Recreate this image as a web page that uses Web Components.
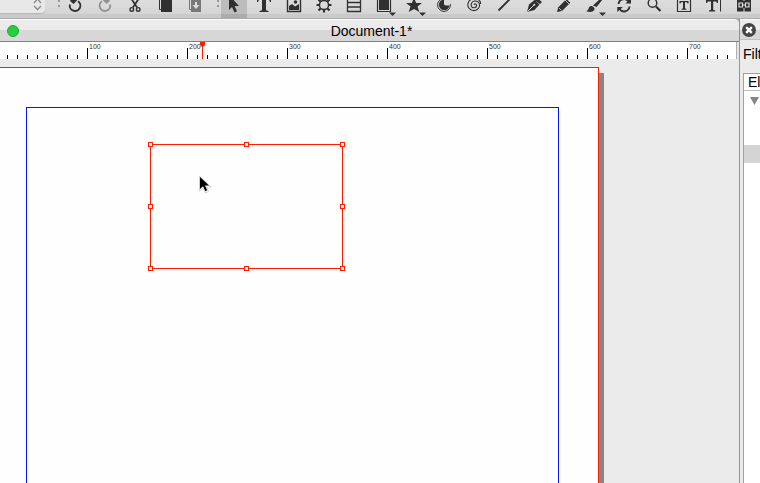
<!DOCTYPE html>
<html lang="en">
<head>
<meta charset="utf-8">
<title>Document-1*</title>
<style>
html, body { height: 100%; margin: 0; }
body { overflow: hidden; font-family: "Liberation Sans", Arial, sans-serif; color: #000; background: #ebebeb; }
</style>
</head>
<body>
<layout-app></layout-app>
<script>
const define = (name, html, setup) => customElements.define(name, class extends HTMLElement {
  constructor() {
    super();
    const t = document.createElement('template');
    t.innerHTML = html;
    this.attachShadow({ mode: 'open' }).append(t.content.cloneNode(true));
  }
  connectedCallback() { if (setup) setup(this, this.shadowRoot); }
});

/* Icon drawings on a 26 x 18 grid; shapes run past the top edge of the tool bar. */
const icons = {
  undo: '<path d="M7.900 4.500A5.300 5.300 0 1 0 16 1.200" fill="none" stroke="currentColor" stroke-width="1.900"/><path d="M8 -1h7v1.500L11.500 4 8.500 1.500z"/>',
  redo: '<path d="M18.100 4.500A5.300 5.300 0 1 1 10 1.200" fill="none" stroke="currentColor" stroke-width="1.900"/><path d="M18 -1h-7v1.500L14.500 4l3-2.500z"/>',
  cut: '<path d="M9.500-1l5.600 8.500M16.500-1l-5.600 8.500" fill="none" stroke="currentColor" stroke-width="1.7"/><g fill="none" stroke="currentColor" stroke-width="1.4"><circle cx="9.8" cy="9.4" r="1.8"/><circle cx="16.2" cy="9.4" r="1.8"/></g>',
  copy: '<path d="M9-3h11v15H9z" transform="translate(0 0)"/><path d="M7.500-3V9.500H9" fill="none" stroke="currentColor"/>',
  paste: '<path d="M7.500-3V9.500H10" fill="none" stroke="currentColor"/><path d="M9-3h10v15H9z"/><path d="M13 2h2v3h2.500L14 9l-3.500-4H13z" fill="#ddd"/>',
  select: '<path d="M8-5v15l3-3 2.500 5.500 2.500-1.200L13.600 6H18z"/>',
  text: '<path d="M6-2h14v4h-1l-.8-2H15v10.300L17.500 11v1h-9v-1l2.500-.7V0H7.800L7 2H6z"/>',
  image: '<path d="M6.500-4h13v15.500h-13z" fill="none" stroke="currentColor" stroke-width="1.400"/><path d="M8 10V6l3-2 3 2.500L18 4v6z"/><circle cx="14.500" cy="2" r="1.800"/>',
  gear: '<circle cx="13" cy="5" r="4.600" fill="none" stroke="currentColor" stroke-width="1.500"/><path d="M13 10v2.500M18 5h2.500M8 5H5.500M9.500 8.500l-2 2M16.500 8.500l2 2M9.500 1.500l-2-2M16.500 1.500l2-2" stroke="currentColor" stroke-width="2.200"/>',
  table: '<path d="M6.500-4h13v15.500h-13zM6.500 2.500h13M6.500 7h13" fill="none" stroke="currentColor" stroke-width="1.300"/>',
  shape: '<path d="M6.500-4h13v15.500h-13z" fill="none" stroke="currentColor" stroke-width="1.200"/><path d="M8-3h10v13H8z"/><path d="M18 12.500h7L21.500 16z"/>',
  star: '<path d="M13-2l2.200 5H21l-4.500 3.500L18.300 12 13 9l-5.300 3 1.800-5.500L5 3h5.800z"/><path d="M18 12.500h7L21.500 16z"/>',
  arc: '<circle cx="13" cy="5" r="6.400" fill="none" stroke="currentColor"/><path d="M13-.5A5.300 5.300 0 1 0 18.500 5.500H15Q12.500 5.500 13 3z"/><path d="M14.500-3H21V4H15.500Q13.500 4 14.500 2z" fill="#dadada"/>',
  spiral: '<path d="M13 5c.5-2 3-1 2.500 1s-4 2.500-5 .5 0-5 3-5.500 5.500 2 5 5-3.500 5-6.500 4.500S6.500 7.500 6.800 4.500 9-1 13-1.500 20 1 19.500 4" fill="none" stroke="currentColor" stroke-width="1.100"/>',
  line: '<path d="M7.500 10.500L20-2" stroke="currentColor" stroke-width="1.900"/>',
  pen: '<path d="M6 12L8 4.500l5.500-4.500 5 4.500L13.500 10z"/><path d="M13 0l2-3 6 5-2 2z"/><path d="M6.500 11.500L13 5" stroke="#ddd"/><circle cx="13.300" cy="4.800" r="1" fill="#ddd"/>',
  pencil: '<path d="M6 12l1.300-4.800L15.500-1l3.800 3.800L11 11z"/><path d="M8 8l2.500 2.500M14 0l4 4" stroke="#ddd" stroke-width=".8"/>',
  brush: '<path d="M12 5.500L20-2l2 1-6.500 8z"/><path d="M5 11c2 0 2-1.500 3-3.500s3-2 4.500-.5 1.500 3-.5 4.200-5 1-7-.2z"/><path d="M18 12.500h7L21.500 16z"/>',
  rotate: '<path d="M7.500 4A5.500 5.500 0 0 1 17.500 1.500M18.500 6.500A5.500 5.500 0 0 1 8.500 9" fill="none" stroke="currentColor" stroke-width="1.900"/><path d="M14.500 3.500H20V-2zM6.300 7h5.500l-5.500 5z"/>',
  zoom: '<circle cx="11.500" cy="3" r="4.300" fill="none" stroke="currentColor" stroke-width="1.400"/><path d="M15 6.500l4.500 4.500" stroke="currentColor" stroke-width="2.200"/>',
  frame: '<path d="M6.500-2h13v13.500h-13z" fill="none" stroke="currentColor" stroke-width="1.200"/><path d="M8.500 1h9v2.500h-1l-.5-1.200h-2v6l1.500.6v.8h-5v-.8l1.500-.6v-6h-2L9.500 3.500h-1z"/>',
  edit: '<path d="M5 0h12v3h-1l-.8-1.500h-3v8.300l2 .7v1H8v-1l2-.7V1.500H6.800L6 3H5z"/><path d="M19.500-1v12.500" stroke="currentColor"/>',
  link: '<path d="M6-3h6.500V1h1v-4H20V11.500h-6.500V8h-1v3.500H6z"/><path d="M8 3h3.500v4H8zM14.500 3H18v4h-3.500zM11 5h4" fill="none" stroke="#ddd" stroke-width="1.200"/>'
};

define('tool-button', `<style>
:host { display: block; flex: none; }
button { display: block; width: 26px; height: 18px; padding: 0; border: 0; background: none; color: #303030; overflow: hidden; }
:host([active]) button { background: linear-gradient(#bdbdbd 14px, #acacac 14px); }
:host([muted]) button { color: #929292; }
:host([dim]) button { color: #777; }
svg { display: block; fill: currentColor; }
</style><button type="button"><svg width="26" height="18" viewBox="0 0 26 18" aria-hidden="true"></svg></button>`,
(host, root) => {
  root.querySelector('button').setAttribute('aria-label', host.getAttribute('label'));
  root.querySelector('svg').innerHTML = icons[host.getAttribute('icon')];
});

define('tool-grip', `<style>
:host { display: grid; flex: none; width: 2px; height: 18px; align-content: start; gap: 3px; }
i { width: 2px; height: 2px; background: #999; }
</style><i></i><i></i>`);

define('tool-bar', `<style>
:host { display: flex; gap: 2px; height: 18px; background: linear-gradient(#dddddd, #d5d5d5 14px, #cacaca 14px); border-bottom: 1px solid #ababab; overflow: hidden; }
.field { flex: none; display: flex; width: 45px; height: 13px; margin-right: 11px; border-radius: 0 0 4px 0; background: #e8e8e8; box-shadow: 0 1px #b5b5b5; position: relative; }
select { flex: 1; width: 100%; height: 13px; appearance: none; border: 0; padding: 0; background: none; }
svg { position: absolute; right: 3px; top: 0; pointer-events: none; }
.tools { display: flex; gap: 4px; }
.first { margin-right: 7px; }
</style>
<div class="field"><select aria-label="Preset"></select><svg width="9" height="13" fill="none" stroke="#888" stroke-width="1.3"><path d="M1 3l3.500-4L8 3M1 6l3.500 3.500L8 6"/></svg></div>
<tool-grip></tool-grip>
<div class="tools first">
<tool-button icon="undo" label="Undo"></tool-button><tool-button icon="redo" label="Redo" muted></tool-button><tool-button icon="cut" label="Cut"></tool-button><tool-button icon="copy" label="Copy"></tool-button><tool-button icon="paste" label="Paste" dim></tool-button>
</div>
<tool-grip></tool-grip>
<div class="tools">
<tool-button icon="select" label="Select" active></tool-button><tool-button icon="text" label="Text frame"></tool-button><tool-button icon="image" label="Image frame"></tool-button><tool-button icon="gear" label="Render frame"></tool-button><tool-button icon="table" label="Table"></tool-button><tool-button icon="shape" label="Shape"></tool-button><tool-button icon="star" label="Polygon"></tool-button><tool-button icon="arc" label="Arc"></tool-button><tool-button icon="spiral" label="Spiral"></tool-button><tool-button icon="line" label="Line"></tool-button><tool-button icon="pen" label="Bezier curve"></tool-button><tool-button icon="pencil" label="Freehand"></tool-button><tool-button icon="brush" label="Calligraphic line"></tool-button><tool-button icon="rotate" label="Rotate"></tool-button><tool-button icon="zoom" label="Zoom"></tool-button><tool-button icon="frame" label="Edit contents"></tool-button><tool-button icon="edit" label="Edit text"></tool-button><tool-button icon="link" label="Link frames"></tool-button>
</div>`);

define('title-bar', `<style>
:host { display: block; background: #b4b4b4; }
header { display: grid; grid-template-columns: 20px 1fr; align-items: center; height: 23px; box-sizing: border-box; border-top: 1px solid #fafafa; border-bottom: 1px solid #808080; background: linear-gradient(#ebebeb 10px, #d7d7d7 10px); border-radius: 0 5px 0 0; }
button { width: 12px; height: 12px; margin-left: 7px; padding: 0; border: 1px solid #1dad2b; border-radius: 50%; background: #28cd41; }
h1 { margin: 0; padding-right: 16px; font-size: 14px; line-height: 20px; font-weight: 400; text-align: center; }
</style><header><button type="button" aria-label="Zoom window"></button><h1><slot></slot></h1></header>`);

define('page-ruler', `<style>
:host { display: flex; height: 17px; position: relative; margin-right: 2px; border-right: 1px solid #b0b0b0; overflow: hidden;
  background: linear-gradient(90deg, #000 1px, transparent 1px) 87px 100% / 100px 11px repeat-x, linear-gradient(90deg, #000 1px, transparent 1px) 7px 100% / 10px 4px repeat-x, #fff; }
span { flex: none; width: 100px; font-size: 7px; line-height: 9px; color: #333; }
.labels { display: flex; margin-left: 89px; }
svg { position: absolute; left: 199px; top: 0; }
</style><div class="labels"></div><svg width="7" height="17" fill="#ff1e00" aria-hidden="true"><path d="M1 0h5v3L4 5H3L1 3zM3 0h1v17H3z"/></svg>`,
(host, root) => {
  for (let n = 100; n <= 700; n += 100) {
    const s = document.createElement('span');
    s.textContent = n;
    root.querySelector('.labels').append(s);
  }
});

define('selection-frame', `<style>
:host { display: block; }
:host::before { content: ""; position: absolute; inset: 0 -1px -1px 0; border: 1px solid #ff1e00; }
i { position: absolute; width: 3px; height: 3px; margin: -2px; border: 1px solid #ff1e00; background: #fff; }
</style>`, (host, root) => {
  for (const y of [0, 50, 100]) for (const x of [0, 50, 100]) {
    if (x === 50 && y === 50) continue;
    const h = document.createElement('i');
    h.style.left = x + '%';
    h.style.top = y + '%';
    root.append(h);
  }
});

define('page-canvas', `<style>
:host { display: flex; flex: 1; min-height: 0; padding: 8px 135px 0 0; overflow: hidden; background: #ebebeb; position: relative; }
.page { flex: 1; box-sizing: border-box; background: #fefefe; border: solid #ff1e00; border-width: 1px 1px 0 0; padding: 39px 39px 0 26px; display: flex; }
.margins { flex: 1; border: 1px solid #0014ff; border-bottom: 0; }
.shade { flex: none; width: 5px; margin-top: 6px; background: #868686; }
selection-frame { position: absolute; left: 150px; top: 85px; width: 192px; height: 124px; }
svg { position: absolute; left: 198px; top: 117px; }
</style>
<div class="page"><div class="margins"></div></div><div class="shade"></div>
<selection-frame></selection-frame>
<svg width="14" height="19" aria-hidden="true"><path d="M1.500 0v15l3.500-3 2.500 5 3-1.500L8.500 11H13z" fill="#fff" stroke="#c4c4c4" stroke-width=".8"/><path d="M2 1v12l3-2.800 2.400 5 1.800-.9L7 9.500h4z" fill="#000"/></svg>`);

define('outline-panel', `<style>
:host { display: flex; flex-direction: column; width: 20px; overflow: hidden; border-left: 1px solid #949494; background: #ebebeb; box-sizing: content-box; }
header { flex: none; display: flex; align-items: center; height: 21px; padding-left: 2px; box-sizing: border-box; border-top: 1px solid #fafafa; background: linear-gradient(#ebebeb 10px, #d7d7d7 10px); border-bottom: 1px solid #c2c2c2; }
button { padding: 0; border: 0; background: none; }
header svg { display: block; }
label { flex: none; margin: 5px 0 0 3px; font-size: 14px; line-height: 18px; white-space: nowrap; }
table { flex: 1; display: flex; flex-direction: column; margin: 10px 0 0 3px; border: solid #a0a0a0; border-width: 1px 0 0 1px; background: #fff; }
thead, tbody, tr, th, td { display: block; padding: 0; }
th { font-size: 14px; line-height: 16px; font-weight: 400; text-align: left; padding-left: 4px; border-bottom: 1px solid #c0c0c0; white-space: nowrap; }
td { height: 18px; }
.on { background: #d4d4d4; }
td button { display: block; margin: 0 0 0 6px; padding-top: 6px; }
td svg { display: block; }
</style>
<header><button type="button" aria-label="Close panel"><svg width="14" height="14"><circle cx="7" cy="7" r="7" fill="#454545"/><path d="M4.200 4.200l5.600 5.600M9.800 4.200L4.200 9.800" stroke="#fff" stroke-width="2.400"/></svg></button></header>
<label id="filter">Filter:</label>
<table aria-labelledby="filter"><thead><tr><th>Element</th></tr></thead><tbody>
<tr><td><button type="button" aria-label="Collapse"><svg width="9" height="8"><path d="M0 0h9L4.500 8z" fill="#858585"/></svg></button></td></tr>
<tr><td></td></tr><tr><td></td></tr><tr class="on"><td></td></tr></tbody></table>`);

define('layout-app', `<style>
:host { display: grid; grid-template: auto minmax(0, 1fr) / minmax(0, 1fr) auto; height: 100vh; overflow: hidden; }
tool-bar { grid-column: 1 / -1; min-width: 0; }
main { display: flex; flex-direction: column; min-width: 0; background: #e4e4e4; }
</style>
<tool-bar></tool-bar>
<main><title-bar>Document-1*</title-bar><page-ruler></page-ruler><page-canvas></page-canvas></main>
<outline-panel></outline-panel>`);
</script>
</body>
</html>
